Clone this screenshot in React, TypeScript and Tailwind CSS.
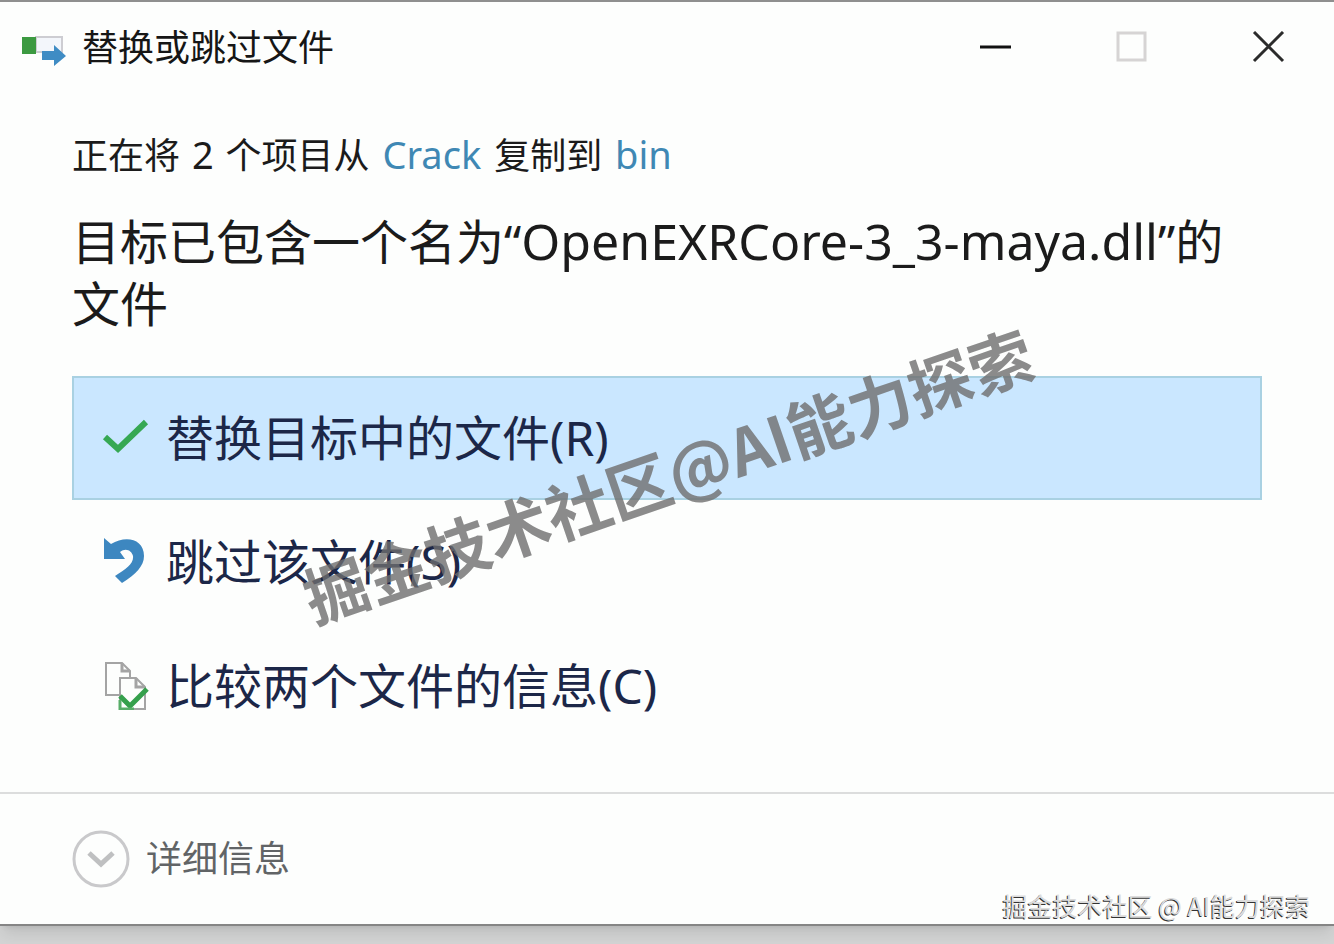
import type { ReactNode } from "react";

function CopyIcon() {
  return (
    <svg width="46" height="36" viewBox="0 0 46 36" aria-hidden="true">
      <rect x="16" y="7" width="26" height="15" fill="#f3f6fb" stroke="#cdcdd2" strokeWidth="2" />
      <rect x="2" y="7" width="14" height="17" fill="#3c9a41" />
      <path d="M22 21h12v-6l12 11-12 10v-6H22z" fill="#3f8cc4" />
    </svg>
  );
}

function CheckIcon() {
  return (
    <svg width="48" height="48" viewBox="0 0 48 48" aria-hidden="true">
      <path d="M3 23l13 12L44 8" fill="none" stroke="#36a853" strokeWidth="6" />
    </svg>
  );
}

function SkipIcon() {
  return (
    <svg width="48" height="48" viewBox="0 0 48 48" aria-hidden="true">
      <path d="M2 0v21h21l-5-7c6-5 12-1 13 4 1 8-7 13-18 20l7 7c14-9 22-17 22-27C42 1 24-3 9 6z" fill="#3d87c0" />
    </svg>
  );
}

function CompareIcon() {
  return (
    <svg width="48" height="48" viewBox="0 0 48 48" fill="none" aria-hidden="true">
      <path d="M4 1h16l8 8v24H4z" fill="#fdfefd" stroke="#a4a4a4" strokeWidth="2" />
      <path d="M20 1v8h8" stroke="#a4a4a4" strokeWidth="3" />
      <path d="M18 16h16l9 9v22H18z" fill="#fdfefd" stroke="#a4a4a4" strokeWidth="2" />
      <path d="M34 16v9h9" stroke="#a4a4a4" strokeWidth="3" />
      <path d="M18 34l10 10 17-17" stroke="#35a04c" strokeWidth="5" />
      <path d="M18 38v9h14" stroke="#58ad68" strokeWidth="3" />
    </svg>
  );
}

function Option({ icon, label, selected }: { icon: ReactNode; label: string; selected?: boolean }) {
  return (
    <button
      type="button"
      className={
        "flex h-[124px] w-full items-center gap-4 border-2 pl-7 text-left text-[48px] leading-[72px] text-[#1c2748] " +
        (selected ? "border-[#a9d1e2] bg-[#cae7ff]" : "border-transparent")
      }
    >
      {icon}
      <span>{label}</span>
    </button>
  );
}

export default function App() {
  return (
    <div className="relative min-h-screen w-full overflow-hidden bg-[#d3d4d4] pb-5 font-['Noto_Sans','Noto_Sans_CJK_SC',sans-serif]">
      <main className="border-t-2 border-b-2 border-t-[#8f8f8f] border-b-[#858585] bg-[#fdfefd] shadow-lg">
        {/* Title bar */}
        <header className="flex h-[92px] items-center justify-between pr-12 pl-5">
          <div className="flex items-center gap-4">
            <CopyIcon />
            <h1 className="text-[36px] leading-[54px] text-[#161616]">替换或跳过文件</h1>
          </div>
          <div className="flex items-center gap-[102px]">
            <button type="button" aria-label="最小化">
              <svg width="34" height="34" viewBox="0 0 34 34">
                <path d="M0 16h31" stroke="#111" strokeWidth="3" />
              </svg>
            </button>
            <button type="button" aria-label="最大化" disabled>
              <svg width="34" height="34" viewBox="0 0 34 34">
                <rect x="2" y="2" width="27" height="27" fill="none" stroke="#d6d4d4" strokeWidth="3" />
              </svg>
            </button>
            <button type="button" aria-label="关闭">
              <svg width="34" height="34" viewBox="0 0 34 34">
                <path d="M2 1l29 29M31 1L2 30" stroke="#2b2b2b" strokeWidth="3" />
              </svg>
            </button>
          </div>
        </header>

        {/* Message */}
        <section className="px-[72px] pt-[30px]">
          <p className="text-[36px] leading-[60px] text-[#1b1b1b]">
            正在将<span className="px-[2px] text-[38px]"> 2 </span>个项目从
            <span className="px-[3px] text-[38px]">
              {" "}
              <a href="#crack" className="text-[#3f88b4]">Crack</a>{" "}
            </span>
            复制到
            <span className="px-[3px] text-[38px]">
              {" "}
              <a href="#bin" className="text-[#3f88b4]">bin</a>
            </span>
          </p>
          <h2 className="mt-6 text-[48px] leading-[62px] break-all text-[#1b1b1b]">
            目标已包含一个名为“<span className="text-[50px]">OpenEXRCore-3_3-maya.dll</span>”的文件
          </h2>
        </section>

        {/* Choices */}
        <section className="px-[72px] pt-[41px] pb-11">
          <Option icon={<CheckIcon />} label="替换目标中的文件(R)" selected />
          <Option icon={<SkipIcon />} label="跳过该文件(S)" />
          <Option icon={<CompareIcon />} label="比较两个文件的信息(C)" />
        </section>

        {/* Details */}
        <footer className="border-t-2 border-[#dcdddd] px-[72px] py-9">
          <button type="button" className="flex items-center gap-4 text-[36px] leading-[58px] text-[#616466]">
            <svg width="58" height="58" viewBox="0 0 58 58" fill="none" aria-hidden="true">
              <circle cx="29" cy="29" r="27" stroke="#c9c9cb" strokeWidth="3" />
              <path d="M17 23l12 11 12-11" stroke="#bfc0c1" strokeWidth="5" />
            </svg>
            <span>详细信息</span>
          </button>
        </footer>
      </main>

      {/* Watermarks */}
      <div className="pointer-events-none absolute inset-0 flex items-center justify-center">
        <span className="-rotate-19 text-[64px] leading-none font-bold whitespace-nowrap text-[#6e6e6e]/80 font-['Noto_Sans_CJK_SC',sans-serif]">
          掘金技术社区@AI能力探索
        </span>
      </div>
      <p className="pointer-events-none absolute right-6 bottom-5 text-[25px] leading-[42px] text-[#dcdcdc] font-['Noto_Sans_CJK_SC',sans-serif] [text-shadow:-1px_1px_0_#333]">
        掘金技术社区 @ AI能力探索
      </p>
    </div>
  );
}
